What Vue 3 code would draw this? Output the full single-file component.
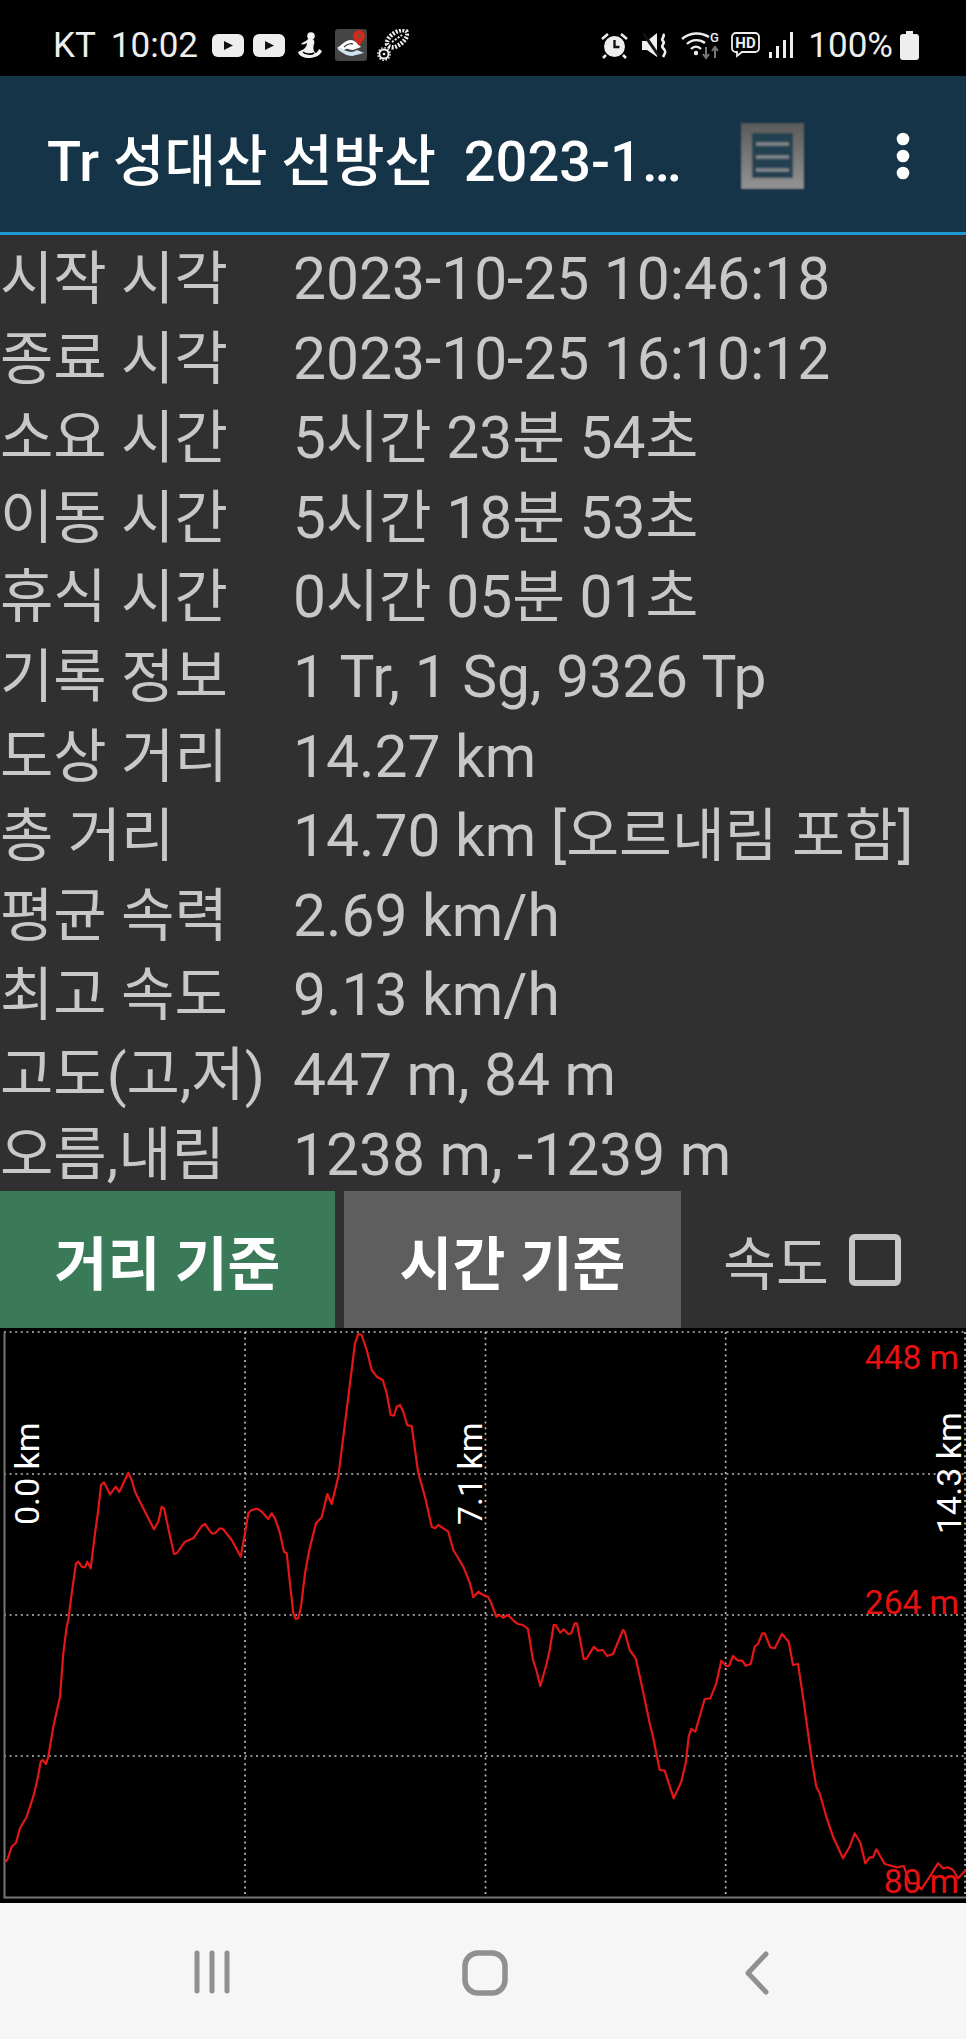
<script setup>
import { computed } from 'vue'

const title = 'Tr 성대산 선방산\u00a0\u00a02023-1…'

const rows = [
  ['시작 시각', '2023-10-25 10:46:18'],
  ['종료 시각', '2023-10-25 16:10:12'],
  ['소요 시간', '5시간 23분 54초'],
  ['이동 시간', '5시간 18분 53초'],
  ['휴식 시간', '0시간 05분 01초'],
  ['기록 정보', '1 Tr, 1 Sg, 9326 Tp'],
  ['도상 거리', '14.27 km'],
  ['총 거리', '14.70 km [오르내림 포함]'],
  ['평균 속력', '2.69 km/h'],
  ['최고 속도', '9.13 km/h'],
  ['고도(고,저)', '447 m, 84 m'],
  ['오름,내림', '1238 m, -1239 m'],
]

// hangul runs sit a little tighter than the digits in the original font
const runs = (text) => text.split(/([가-힣]+)/).filter(Boolean)
const isHangul = (text) => /[가-힣]/.test(text)

// elevation trace, sampled piece by piece, each piece with its own origin
const pieces = [
  [0, 1620, [15,725,22,720,35,680,48,668,60,625,80,590,100,530,112,480,122,425,128,420,138,432,145,410,160,320,180,230,190,100,200,20,205,0]],
  [0, 1320, [215,820,228,730,235,725,245,740,255,742,262,725,272,745,285,640,295,570,303,495,312,487,330,523,347,500,358,516,385,458,395,480,405,515,435,575,462,628,475,605,485,560,492,565,505,625,522,702,530,700,555,665,580,655,605,618,615,612,635,640,645,640,660,625,670,628,695,660,722,710,735,640,745,580,755,570,772,566,785,575,805,597,815,580,825,595,840,640,852,695,860,700,870,790,880,880,887,897,895,895,903,860,915,760,928,690,948,610,965,592,982,522,995,552,1015,470,1035,310,1050,190,1065,70,1075,42,1085,45,1100,90,1115,150,1130,170,1148,180,1160,220,1172,285,1182,287,1190,260,1200,255,1210,275,1222,316,1235,318,1255,460,1275,530,1295,620,1305,625,1315,615,1345,635,1360,690,1390,740,1410,790,1420,832,1435,815,1449,825]],
  [483, 1320, [15,830,25,850,40,890,50,885,60,893,75,885]],
  [483, 1620, [95,5,105,12,120,15,135,27,150,120,160,150,172,198,190,135,200,90,212,15,218,15,232,38,242,28,255,42,265,40,275,10,282,10,302,117,310,117,333,80,345,92,360,90,372,108,390,102,420,30,425,35,440,90,458,115,475,190,500,310,510,350,530,450,545,452,572,535,595,485,608,430,617,350,625,327,637,335,665,237,682,235,700,190,715,122,730,138,738,138,750,108,765,122,778,122,788,137,803,132,815,80,825,72,838,40,845,40,862,82,875,85,897,42,917,65,930,135,945,132,960,230,985,410,1000,500,1010,520,1030,590,1050,650,1080,715,1100,680,1115,640,1132,668,1147,730,1160,712,1170,712,1180,688,1205,732,1240,742,1262,738,1280,790,1300,790,1315,808,1340,770,1365,730,1380,745,1395,742,1410,750,1425,775,1449,750]],
]

const trace = computed(() => {
  const out = []
  for (const [ox, oy, pts] of pieces) {
    for (let i = 0; i < pts.length; i += 2) {
      out.push((ox + pts[i] / 3).toFixed(1) + ',' + (oy + pts[i + 1] / 3).toFixed(1))
    }
  }
  return out.join(' ')
})

const gridH = [1332, 1474, 1615, 1756]
const gridV = [245, 485.5, 725.7, 965]
</script>

<template>
  <div class="phone">
    <div class="status">
      <span class="carrier">KT</span>
      <span class="clock">10:02</span>
      <svg class="ic yt" width="32" height="23" viewBox="0 0 32 23"><rect width="32" height="23" rx="6" fill="#eee"/><path d="M12 7l9 4.5-9 4.5z" fill="#111"/></svg>
      <svg class="ic yt2" width="32" height="23" viewBox="0 0 32 23"><rect width="32" height="23" rx="6" fill="#eee"/><path d="M12 7l9 4.5-9 4.5z" fill="#111"/></svg>
      <svg class="ic person" width="24" height="27" viewBox="0 0 24 27"><circle cx="13" cy="4" r="3.8" fill="#f2f2f2"/><path d="M10 7c-1 2-5 3-7 5 2 1 4 0 6-1 0 2-1 4-3 6l-6 3c1 4 6 6 11 6s11-2 13-7l-3-2c-1 2-2 4-4 4-2-3-2-6-1-9 1-2 0-5-2-5z" fill="#f2f2f2"/><path d="M5 20c2 2 8 3 11 1" fill="none" stroke="#000" stroke-width="1.6"/></svg>
      <svg class="ic app" width="32" height="32" viewBox="0 0 32 32"><rect width="32" height="32" rx="3" fill="#454545"/><path d="M2 19c4-2 8-8 14-8 4 0 7 4 10 7l-8 3c-3 0-5-2-7-1l-4 2z" fill="#fff"/><path d="M9 18c3-3 6-4 9-3" fill="none" stroke="#454545" stroke-width="1.4"/><path d="M3 21c5 3 9 6 14 6l12-3-7-3c-4 3-9 2-13 0l-4-3z" fill="#cfe3ee"/><path d="M24 17c-3-5-6-7-6-10a6 6 0 0 1 12 0c0 3-3 5-6 10z" fill="#d8261c"/><circle cx="24" cy="7" r="2.4" fill="#8a4a2a"/></svg>
      <svg class="ic shoe" width="32" height="32" viewBox="0 0 32 32"><path d="M10 13c1-5 8-11 15-12 5 0 6 3 5 6-2 5-7 9-12 11-4 1-9-1-8-5z" fill="none" stroke="#eee" stroke-width="4.5" stroke-dasharray="2 1.4"/><path d="M15 13l10-7" stroke="#eee" stroke-width="2" stroke-dasharray="2 1.5"/><circle cx="7" cy="25" r="4.6" fill="none" stroke="#eee" stroke-width="2"/><circle cx="7" cy="25" r="6.2" fill="none" stroke="#eee" stroke-width="1.4" stroke-dasharray="1.6 1.6"/><circle cx="7" cy="25" r="1.3" fill="#eee"/></svg>

      <span class="spacer"></span>

      <svg class="ic alarm" width="27" height="27" viewBox="0 0 27 27"><circle cx="13.5" cy="14.5" r="10.5" fill="#eee"/><path d="M13.5 8v7h5" fill="none" stroke="#111" stroke-width="2.4"/><path d="M1 7l6-5M26 7l-6-5M5 23l-3 3M22 23l3 3" stroke="#eee" stroke-width="2.6"/></svg>
      <svg class="ic mute" width="27" height="27" viewBox="0 0 27 27"><path d="M0 9h5l10-8v24L5 18H0z" fill="#eee"/><path d="M1 1l16 23" stroke="#111" stroke-width="3"/><path d="M21 2c3 3-3 4 0 7s-3 4 0 7 3 4 0 9" fill="none" stroke="#eee" stroke-width="2.6"/></svg>
      <svg class="ic wifi" width="39" height="30" viewBox="0 0 39 30"><path d="M1 9c8-7 19-7 27-2M6 14c5-5 13-5 18-1M10 19c3-3 7-3 10 0" fill="none" stroke="#eee" stroke-width="2.4"/><circle cx="15" cy="23" r="2.2" fill="#eee"/><path d="M25 17v10M22 24l3 4 3-4" fill="none" stroke="#777" stroke-width="2"/><path d="M34 28V18M31 21l3-4 3 4" fill="none" stroke="#777" stroke-width="2"/><text x="29" y="12" class="g-mark">G</text></svg>
      <svg class="ic hd" width="29" height="26" viewBox="0 0 29 26"><path d="M5 1h19a4 4 0 0 1 4 4v11a4 4 0 0 1-4 4H11l-5 4v-4H5a4 4 0 0 1-4-4V5a4 4 0 0 1 4-4z" fill="none" stroke="#eee" stroke-width="1.8"/><text x="14.5" y="16" class="hd-mark">HD</text></svg>
      <svg class="ic signal" width="25" height="26" viewBox="0 0 25 26"><rect x="0" y="20" width="3" height="6" fill="#eee"/><rect x="7" y="14" width="3" height="12" fill="#eee"/><rect x="14" y="8" width="3" height="18" fill="#eee"/><rect x="21" y="0" width="3" height="26" fill="#eee"/></svg>
      <span class="battery-text">100%</span>
      <svg class="ic battery" width="19" height="29" viewBox="0 0 19 29"><path d="M6 0h7v3h3a3 3 0 0 1 3 3v20a3 3 0 0 1-3 3H3a3 3 0 0 1-3-3V6a3 3 0 0 1 3-3h3z" fill="#eee"/></svg>
    </div>

    <div class="toolbar">
      <span class="title">{{ title }}</span>
      <svg class="list-icon" width="65" height="68" viewBox="0 0 65 68">
        <defs>
          <linearGradient id="listFill" x1="0" y1="0" x2="0" y2="1">
            <stop offset="0" stop-color="#5a5a5a"/>
            <stop offset="1" stop-color="#949494"/>
          </linearGradient>
          <filter id="soft" x="-10%" y="-10%" width="120%" height="120%"><feGaussianBlur stdDeviation="1.3"/></filter>
        </defs>
        <g filter="url(#soft)">
          <rect x="1" y="1" width="63" height="66" fill="url(#listFill)"/>
          <rect x="12" y="11" width="41" height="45" fill="#24404f"/>
          <path d="M16 22h33M16 35h33M16 48h33" stroke="#8a8f92" stroke-width="3"/>
        </g>
      </svg>
      <svg class="more-icon" width="14" height="48" viewBox="0 0 14 48"><circle cx="7" cy="7" r="6.3" fill="#fff"/><circle cx="7" cy="24" r="6.3" fill="#fff"/><circle cx="7" cy="41" r="6.3" fill="#fff"/></svg>
    </div>

    <div class="info">
      <div v-for="row in rows" :key="row[0]" class="info-row">
        <span class="info-label">{{ row[0] }}</span>
        <span class="info-value"><span v-for="(run, i) in runs(row[1])" :key="i" :class="{ hangul: isHangul(run) }">{{ run }}</span></span>
      </div>
    </div>

    <div class="controls">
      <button class="mode mode-on">거리 기준</button>
      <button class="mode mode-off">시간 기준</button>
      <label class="speed">
        <span>속도</span>
        <span class="checkbox"></span>
      </label>
    </div>

    <svg class="chart" width="966" height="575" viewBox="0 1328 966 575">
      <rect x="0" y="1328" width="966" height="575" fill="#000"/>
      <line v-for="y in gridH" :key="'h' + y" x1="4" x2="966" :y1="y" :y2="y" class="dots"/>
      <line v-for="x in gridV" :key="'v' + x" :x1="x" :x2="x" y1="1332" y2="1897" class="dots"/>
      <path d="M4.5 1332V1897.5H966" fill="none" stroke="#777" stroke-width="2"/>
      <polyline :points="trace" fill="none" stroke="#e51616" stroke-width="2.2" stroke-linejoin="round"/>
      <text class="km" transform="translate(39 1525) rotate(-90)">0.0 km</text>
      <text class="km" transform="translate(482 1525) rotate(-90)">7.1 km</text>
      <text class="km" transform="translate(961 1534) rotate(-90)">14.3 km</text>
      <text class="alt" x="959" y="1369" text-anchor="end">448 m</text>
      <text class="alt" x="959" y="1614" text-anchor="end">264 m</text>
      <text class="alt" x="959" y="1893" text-anchor="end">80 m</text>
    </svg>

    <div class="navbar">
      <svg width="36" height="44" viewBox="0 0 36 44"><path d="M3 3v38M18 3v38M33 3v38" stroke="#909090" stroke-width="5" stroke-linecap="round"/></svg>
      <svg width="46" height="46" viewBox="0 0 46 46"><rect x="3" y="3" width="40" height="40" rx="13" fill="none" stroke="#909090" stroke-width="5.5"/></svg>
      <svg width="24" height="44" viewBox="0 0 24 44"><path d="M21 3L3 22l18 19" fill="none" stroke="#909090" stroke-width="5" stroke-linecap="round" stroke-linejoin="round"/></svg>
    </div>
  </div>
</template>

<style scoped>
.phone {
  width: 966px;
  height: 2039px;
  display: flex;
  flex-direction: column;
  overflow: hidden;
  background: #303030;
  font-family: Roboto, "Noto Sans CJK KR", sans-serif;
}

.status {
  height: 76px;
  flex: none;
  background: #000;
  color: #eee;
  display: flex;
  align-items: center;
  padding: 14px 47px 0 53px;
  box-sizing: border-box;
  font-size: 35px;
}
.carrier { margin-right: 15px; }
.clock { margin-right: 14px; }
.spacer { flex: 1; }
.ic { flex: none; }
.yt2 { margin-left: 9px; }
.person { margin-left: 13px; }
.app { margin-left: 13px; }
.shoe { margin-left: 10px; }
.mute { margin-left: 14px; }
.wifi { margin-left: 12px; }
.hd { margin-left: 11px; }
.signal { margin-left: 9px; }
.battery-text { margin-left: 14px; }
.battery { margin-left: 7px; }
.g-mark { font-size: 13px; fill: #eee; font-weight: 500; }
.hd-mark { font-size: 15px; font-weight: 700; fill: #eee; text-anchor: middle; }

.toolbar {
  height: 159px;
  flex: none;
  box-sizing: border-box;
  background: #163447;
  border-bottom: 3px solid #1d9ad0;
  display: flex;
  align-items: center;
  padding: 4px 0 0 47px;
}
.title {
  width: 693px;
  flex: none;
  color: #fff;
  font-size: 56px;
  font-weight: 500;
  white-space: pre;
}
.list-icon { flex: none; }
.more-icon { flex: none; margin-left: 91px; }

.info {
  height: 956px;
  flex: none;
  box-sizing: border-box;
  padding-top: 5px;
  color: #c8c8c8;
  font-size: 58px;
}
.info-row {
  display: flex;
  height: 79.6px;
  line-height: 79.6px;
  white-space: nowrap;
}
.info-label { width: 293px; flex: none; }
.info-value { font-size: 58.7px; }
.hangul { font-size: 57.4px; }

.controls {
  height: 137px;
  flex: none;
  display: flex;
}
.mode {
  border: 0;
  padding: 0;
  color: #fff;
  font-family: inherit;
  font-size: 57.5px;
  font-weight: 700;
}
.mode-on { width: 335px; background: #3a7a58; }
.mode-off { width: 337px; margin-left: 9px; background: #5e5e5e; }
.speed {
  display: flex;
  align-items: center;
  margin-left: 42px;
  color: #c8c8c8;
  font-size: 57.5px;
}
.checkbox {
  width: 52px;
  height: 52px;
  box-sizing: border-box;
  margin-left: 20px;
  border: 6px solid #c8c8c8;
  border-radius: 6px;
}

.chart { display: block; flex: none; }
.dots {
  stroke: #bbb;
  stroke-width: 1.7;
  stroke-dasharray: 2 3.6;
}
.km { font-size: 34px; fill: #fff; }
.alt { font-size: 33.5px; fill: #e81010; }

.navbar {
  flex: 1;
  background: #f6f6f6;
  display: flex;
  align-items: flex-start;
  padding: 47px 0 0 194px;
}
.navbar svg:nth-child(2) { margin-left: 232px; }
.navbar svg:nth-child(3) { margin-left: 237px; margin-top: 1px; }
</style>
